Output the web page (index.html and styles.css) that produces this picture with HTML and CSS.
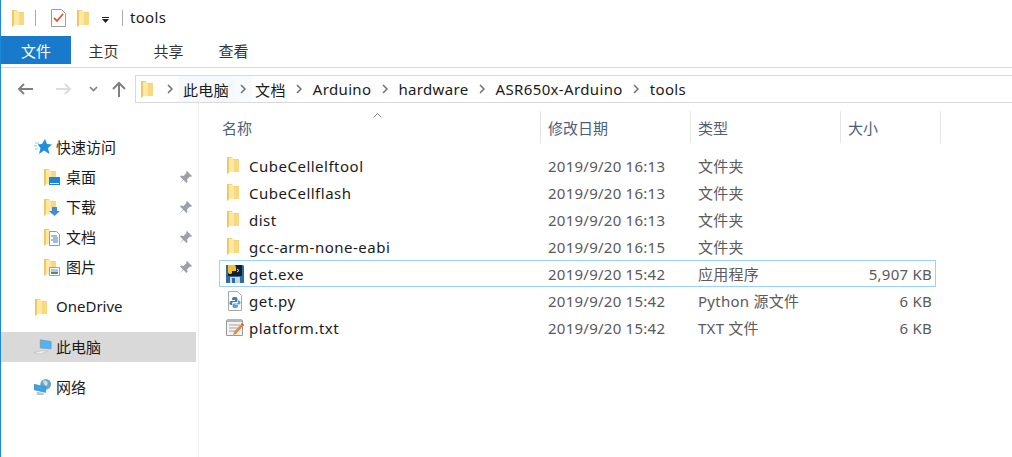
FILE: index.html
```html
<!DOCTYPE html>
<html lang="zh-CN">

<head>
    <meta charset="UTF-8">
    <title>tools</title>
    <link rel="stylesheet" href="styles.css">
</head>

<body>
    <svg class="defs" aria-hidden="true">
        <symbol id="folder" viewBox="0 0 12 17">
            <path d="M0 0h5l1 2h6v13H2l-2 2z" fill="#f6d272"/>
            <path d="M0 0h2v15.500L0 17z" fill="#f1c75f"/>
            <path d="M2 1h4l1 2v12H2z" fill="#fde8a6"/>
            <path d="M7 3h5v12H7z" fill="#f9d97f"/>
        </symbol>
        <symbol id="pin" viewBox="0 0 13 13">
            <path d="M8 0l5 5-1 1-1-.5-3 3 .5 2.500-1 1-3-3-4 3.500 3.500-4-3-3 1-1 2.500.5 3-3L7 1z" fill="#9aa1a8"/>
        </symbol>
        <symbol id="chev" viewBox="0 0 6 10">
            <path d="M1 1l4 4-4 4" fill="none" stroke="#6f6f6f" stroke-width="1.500"/>
        </symbol>
    </svg>

    <div class="titlebar">
        <svg class="ic-folder"><use href="#folder"/></svg>
        <span class="vsep first"></span>
        <svg class="ic-check" viewBox="0 0 15 18">
            <path d="M.5.500h10l4 4v13H.5z" fill="#fff" stroke="#9c9c9c"/>
            <path d="M3 9l3 3 6-7" fill="none" stroke="#e2562a" stroke-width="1.800"/>
        </svg>
        <svg class="ic-folder"><use href="#folder"/></svg>
        <svg class="ic-drop" viewBox="0 0 7 6">
            <path d="M0 0h7v1H0zM0 2h7L3.500 6z" fill="#222"/>
        </svg>
        <span class="vsep"></span>
        <span class="title">tools</span>
    </div>

    <div class="ribbon">
        <span class="tab active">文件</span>
        <span class="tab">主页</span>
        <span class="tab">共享</span>
        <span class="tab">查看</span>
    </div>

    <div class="navbar">
        <svg class="nav-arrow back" viewBox="0 0 16 12"><path d="M16 6H2M7 1L2 6l5 5" fill="none" stroke="#808080" stroke-width="2"/></svg>
        <svg class="nav-arrow fwd" viewBox="0 0 16 12"><path d="M0 6h14M9 1l5 5-5 5" fill="none" stroke="#dcdcdc" stroke-width="2"/></svg>
        <svg class="nav-down" viewBox="0 0 9 6"><path d="M1 1l3.500 3.500L8 1" fill="none" stroke="#808080" stroke-width="1.600"/></svg>
        <svg class="nav-up" viewBox="0 0 14 16"><path d="M7 16V2M1 8l6-6 6 6" fill="none" stroke="#808080" stroke-width="2"/></svg>
        <div class="address">
            <svg class="ic-folder"><use href="#folder"/></svg>
            <svg class="crumb-sep home"><use href="#chev"/></svg>
            <span class="crumb hover">此电脑</span>
            <span class="sep-box"><svg class="crumb-sep"><use href="#chev"/></svg></span>
            <span class="crumb">文档</span>
            <svg class="crumb-sep"><use href="#chev"/></svg>
            <span class="crumb">Arduino</span>
            <svg class="crumb-sep"><use href="#chev"/></svg>
            <span class="crumb">hardware</span>
            <svg class="crumb-sep"><use href="#chev"/></svg>
            <span class="crumb">ASR650x-Arduino</span>
            <svg class="crumb-sep"><use href="#chev"/></svg>
            <span class="crumb">tools</span>
        </div>
    </div>

    <div class="main">
        <nav class="sidebar">
            <div class="side-row">
                <svg class="side-icon" viewBox="0 0 18 18">
                    <path d="M11 1l2 5 5 .5-4 3.500 1.500 6L10 12.500 5 16l1.500-6-3-3.500 4.500-.5z" fill="#1f8fe0"/>
                    <path d="M1 5h4M0 8h3M1 11h3" stroke="#8cc8f0" stroke-width="1"/>
                </svg>
                <span class="side-text">快速访问</span>
            </div>
            <div class="side-row sub">
                <span class="stack">
                    <svg class="ic-folder"><use href="#folder"/></svg>
                    <svg class="badge" viewBox="0 0 11 9"><path d="M0 0h11v8H0z" fill="#1b86d8"/><path d="M1 6h9v1H1z" fill="#e6f3fc"/></svg>
                </span>
                <span class="side-text">桌面</span>
                <svg class="pin"><use href="#pin"/></svg>
            </div>
            <div class="side-row sub">
                <span class="stack">
                    <svg class="ic-folder"><use href="#folder"/></svg>
                    <svg class="badge" viewBox="0 0 11 9"><path d="M3 0h5v4h3L5.500 9 0 4h3z" fill="#3d8fdc"/></svg>
                </span>
                <span class="side-text">下载</span>
                <svg class="pin"><use href="#pin"/></svg>
            </div>
            <div class="side-row sub">
                <span class="stack">
                    <svg class="ic-folder"><use href="#folder"/></svg>
                    <svg class="badge doc" viewBox="0 0 11 15"><path d="M.5.500h7l3 3v11H.5z" fill="#fff" stroke="#9a9a9a"/><path d="M2 5h6M4 7h5M2 9h7M4 11h5" stroke="#3a7fc0"/></svg>
                </span>
                <span class="side-text">文档</span>
                <svg class="pin"><use href="#pin"/></svg>
            </div>
            <div class="side-row sub">
                <span class="stack">
                    <svg class="ic-folder"><use href="#folder"/></svg>
                    <svg class="badge" viewBox="0 0 11 9"><path d="M.5.500h10v8H.5z" fill="#fff" stroke="#a0a0a0"/><path d="M2 2h7v3H2z" fill="#a9cde0"/><path d="M2 5h7v2H2z" fill="#5f7f6f"/></svg>
                </span>
                <span class="side-text">图片</span>
                <svg class="pin"><use href="#pin"/></svg>
            </div>
            <div class="side-row group">
                <svg class="ic-folder side-folder"><use href="#folder"/></svg>
                <span class="side-text">OneDrive</span>
            </div>
            <div class="side-row group selected">
                <svg class="side-icon" viewBox="0 0 20 18">
                    <path d="M7 1l12 2v8L7 10z" fill="#4db5f5" stroke="#7a97ab" stroke-width=".8"/>
                    <path d="M0 15l9-2 6 1-8 3z" fill="#ececec" stroke="#b5b5b5" stroke-width=".6"/>
                </svg>
                <span class="side-text">此电脑</span>
            </div>
            <div class="side-row group">
                <svg class="side-icon" viewBox="0 0 20 18">
                    <circle cx="13" cy="6" r="6" fill="#6fa6c4"/>
                    <path d="M10 2c3-1 6 1 5 4s-4 2-5-4z" fill="#c9e0ea"/>
                    <path d="M0 6l13 3v6L0 12z" fill="#35a5ee" stroke="#4f7f9f" stroke-width=".7"/>
                    <path d="M3 14l8 2v2H3z" fill="#b9c6cf"/>
                </svg>
                <span class="side-text">网络</span>
            </div>
        </nav>

        <section class="files">
            <div class="head">
                <div class="hcol name">名称
                    <svg class="sort" viewBox="0 0 9 5"><path d="M.5 4.500L4.500.5l4 4" fill="none" stroke="#8a8a8a"/></svg>
                </div>
                <div class="hcol date">修改日期</div>
                <div class="hcol type">类型</div>
                <div class="hcol size">大小</div>
            </div>

            <div class="rows">
                <div class="row">
                    <span class="fname"><svg class="ic-folder"><use href="#folder"/></svg>CubeCellelftool</span>
                    <span class="meta">2019/9/20 16:13</span><span class="meta">文件夹</span><span class="meta num"></span>
                </div>
                <div class="row">
                    <span class="fname"><svg class="ic-folder"><use href="#folder"/></svg>CubeCellflash</span>
                    <span class="meta">2019/9/20 16:13</span><span class="meta">文件夹</span><span class="meta num"></span>
                </div>
                <div class="row">
                    <span class="fname"><svg class="ic-folder"><use href="#folder"/></svg>dist</span>
                    <span class="meta">2019/9/20 16:13</span><span class="meta">文件夹</span><span class="meta num"></span>
                </div>
                <div class="row">
                    <span class="fname"><svg class="ic-folder"><use href="#folder"/></svg>gcc-arm-none-eabi</span>
                    <span class="meta">2019/9/20 16:15</span><span class="meta">文件夹</span><span class="meta num"></span>
                </div>
                <div class="row focused">
                    <span class="fname">
                        <svg class="ic-file" viewBox="0 0 20 20">
                            <path d="M1 1h17l1 1v17H1z" fill="#2f6f9f"/>
                            <path d="M3 1h14v11H3z" fill="#13202c"/>
                            <path d="M3 1h6c2 0 2 2 2 3v3H7v1c0 1 0 2-2 2-2 0-2-2-2-3z" fill="#f2c230"/>
                            <path d="M12 5l2 1.500-2 1.500" fill="none" stroke="#ddd"/>
                            <path d="M5 13h10v6H5z" fill="#c9d5df"/>
                            <path d="M7 14h3v5H7z" fill="#2f6f9f"/>
                        </svg>get.exe
                    </span>
                    <span class="meta">2019/9/20 15:42</span><span class="meta">应用程序</span><span class="meta num">5,907 KB</span>
                </div>
                <div class="row">
                    <span class="fname">
                        <svg class="ic-file" viewBox="0 0 20 20">
                            <path d="M3.500.5h9l4 4v15h-13z" fill="#fff" stroke="#a8a8a8"/>
                            <path d="M10 6c-2 0-3 .5-3 2v1h3v1H6c-1 0-1.500 1-1.500 2S5 14 6 14h1v-1.500c0-1 1-1.500 2-1.500h2c1 0 1.500-.5 1.500-1.500V8c0-1.500-1-2-2.500-2z" fill="#3d7fb5"/>
                            <path d="M10 17c2 0 3-.5 3-2v-1h-3v-.5h4c1 0 1.500-1 1.500-2s-.5-2-1.500-2h-1v1.500c0 1-1 1.500-2 1.500H9c-1 0-1.500.5-1.500 1.500V15c0 1.500 1 2 2.500 2z" fill="#5b9fce"/>
                        </svg>get.py
                    </span>
                    <span class="meta">2019/9/20 15:42</span><span class="meta">Python 源文件</span><span class="meta num">6 KB</span>
                </div>
                <div class="row">
                    <span class="fname">
                        <svg class="ic-file" viewBox="0 0 20 20">
                            <path d="M1.500 2.500h16v15h-16z" fill="#f3f3f3" stroke="#9a9a9a"/>
                            <path d="M2 1h15v3H2z" fill="#b5b5b5"/>
                            <path d="M4 7h11M4 10h9M4 13h7" stroke="#a5a5a5"/>
                            <path d="M9 14l8-9 2 2-8 9-3 1z" fill="#e8893a"/>
                            <path d="M16 6l1-1 2 2-1 1z" fill="#d9534f"/>
                        </svg>platform.txt
                    </span>
                    <span class="meta">2019/9/20 15:42</span><span class="meta">TXT 文件</span><span class="meta num">6 KB</span>
                </div>
            </div>
        </section>
    </div>
</body>

</html>
```

FILE: styles.css
```css
:root {
    --blue: #1979ca;
    --line: #d9d9d9;
    --head-text: #4c607a;
    --meta-text: #5a5a5a;
}

* {
    box-sizing: border-box;
}

html,
body {
    height: 100%;
}

body {
    margin: 0;
    overflow: hidden;
    display: flex;
    flex-direction: column;
    border-left: 1px solid #1e88d8;
    background: #fff;
    color: #1a1a1a;
    font-family: "Noto Sans", "Noto Sans CJK SC", sans-serif;
    font-size: 15px;
}

svg {
    display: block;
    flex: none;
}

.defs {
    width: 0;
    height: 0;
    position: absolute;
}

.ic-folder {
    width: 12px;
    height: 17px;
}

/* title bar */
.titlebar {
    height: 36px;
    flex: none;
    display: flex;
    align-items: center;
    padding-left: 11px;
}

.vsep {
    width: 1px;
    height: 16px;
    margin: 0 7px 0 13px;
    background: #a8a8a8;
}

.vsep.first {
    margin: 0 15px 0 11px;
}

.ic-check {
    width: 15px;
    height: 18px;
    margin-right: 11px;
}

.ic-drop {
    width: 7px;
    height: 6px;
    margin: 3px 0 0 13px;
}

.title {
    font-size: 15px;
    letter-spacing: .3px;
    padding-bottom: 2px;
}

/* ribbon tabs */
.ribbon {
    height: 32px;
    flex: none;
    display: flex;
    border-bottom: 1px solid var(--line);
    padding-bottom: 3px;
}

.tab {
    width: 65px;
    display: flex;
    align-items: center;
    justify-content: center;
    font-size: 15px;
    color: #333;
}

.tab.active {
    width: 70px;
    background: var(--blue);
    color: #fff;
}

/* address row */
.navbar {
    height: 35px;
    flex: none;
    display: flex;
    align-items: center;
    padding-top: 7px;
}

.nav-arrow {
    width: 16px;
    height: 12px;
}

.nav-arrow.back {
    margin-left: 16px;
}

.nav-arrow.fwd {
    margin-left: 23px;
}

.nav-down {
    width: 9px;
    height: 6px;
    margin-left: 17px;
}

.nav-up {
    width: 14px;
    height: 16px;
    margin-left: 14px;
}

.address {
    flex: 1;
    height: 28px;
    margin-left: 9px;
    padding-left: 5px;
    display: flex;
    align-items: center;
    border: 1px solid var(--line);
    border-right: 0;
    font-size: 15px;
}

.crumb {
    height: 100%;
    padding: 0 4px;
    display: flex;
    align-items: center;
    letter-spacing: .35px;
}

.crumb-sep {
    width: 6px;
    height: 10px;
    margin: 0 6.500px;
}

.crumb-sep.home {
    margin: 0 6px 0 14px;
}

.crumb.hover {
    background: #f5f9fd;
}

.sep-box {
    height: 100%;
    display: flex;
    align-items: center;
    margin-right: -1px;
    background: #f8fbfe;
}

/* main area */
.main {
    flex: 1;
    min-height: 0;
    display: flex;
}

.sidebar {
    width: 198px;
    padding-top: 29px;
    border-right: 1px solid #f0f0f0;
    margin-right: 20px;
    font-size: 15px;
}

.side-row {
    height: 30px;
    display: flex;
    align-items: center;
    padding-left: 33px;
    margin-right: 2px;
}

.side-text {
    padding-bottom: 2px;
}

.side-icon {
    width: 18px;
    height: 18px;
    margin-right: 4px;
}

.side-folder {
    margin: 0 9px 0 1px;
}

.side-row.sub {
    padding-left: 43px;
    padding-right: 4px;
}

.stack {
    position: relative;
    width: 16px;
    height: 17px;
    margin-right: 6px;
}

.badge {
    position: absolute;
    right: 0;
    bottom: 0;
    width: 11px;
    height: 9px;
}

.badge.doc {
    height: 15px;
}

.pin {
    width: 13px;
    height: 13px;
    margin-left: auto;
}

.side-row.group {
    margin-top: 10px;
}

.side-row.selected {
    background: #d9d9d9;
}

/* file list */
.files {
    flex: 1;
    min-width: 0;
}

.head {
    height: 32px;
    margin-top: 8px;
    display: flex;
}

.hcol {
    padding-left: 7px;
    display: flex;
    align-items: center;
    border-right: 1px solid #e5e5e5;
    font-size: 15px;
    color: var(--head-text);
    position: relative;
}

.hcol.name {
    width: 322px;
    padding-left: 3px;
}

.hcol.date,
.hcol.type {
    width: 150px;
}

.hcol.size {
    width: 100px;
}

.sort {
    position: absolute;
    left: 154px;
    top: 2px;
    width: 9px;
    height: 5px;
}

.rows {
    margin-top: 9px;
}

.row {
    height: 27px;
    width: 717px;
    display: grid;
    grid-template-columns: 328px 150px 150px 84px;
    align-items: center;
    border: 1px solid transparent;
}

.row.focused {
    border-color: #99d1ff;
}

.fname {
    display: flex;
    align-items: center;
    padding-left: 6px;
    letter-spacing: .5px;
}

.fname .ic-folder {
    margin: 0 10px 0 1px;
}

.ic-file {
    width: 20px;
    height: 20px;
    margin: 0 4px 0 -1px;
}

.meta {
    color: var(--meta-text);
    letter-spacing: .25px;
}

.meta.num {
    text-align: right;
}
```
